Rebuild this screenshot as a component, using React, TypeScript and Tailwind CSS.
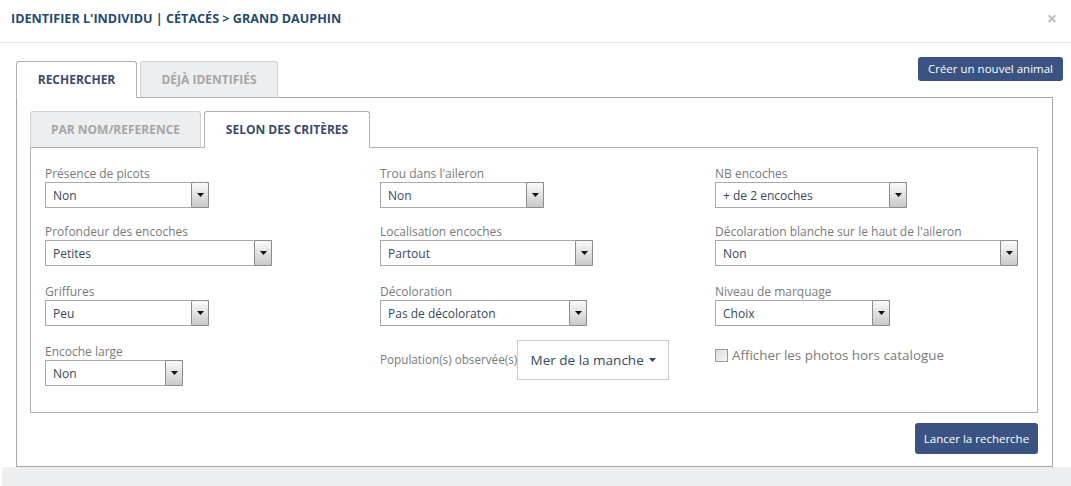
import type { ReactNode } from 'react';

function Arrow() {
  return (
    <svg width="7" height="4" viewBox="0 0 7 4">
      <path d="M0 0h7L3.5 4z" fill="#111" />
    </svg>
  );
}

function Select({ value, width }: { value: string; width: string }) {
  return (
    <div className={`flex h-[26px] border border-[#a9a9a9] bg-white ${width}`}>
      <span className="flex-1 truncate pl-[7px] text-[12px] leading-[25px] text-[#34495e]">{value}</span>
      <span className="-my-px -mr-px flex w-[18px] items-center justify-center rounded-[2px] border border-[#8c8c8c] bg-gradient-to-b from-[#fbfbfb] to-[#c9c9c9]">
        <Arrow />
      </span>
    </div>
  );
}

function Field({ label, value, width, gap }: { label: string; value: string; width: string; gap: string }) {
  return (
    <div className={`flex flex-col ${gap}`}>
      <label className="h-[17px] text-[12px] leading-[17px] text-[#7a7a7a]">{label}</label>
      <Select value={value} width={width} />
    </div>
  );
}

function Tab({ children, active, width }: { children: ReactNode; active?: boolean; width: string }) {
  return (
    <div
      className={`-mb-px flex h-[37px] items-center justify-center rounded-t-[3px] border text-[12px] font-bold ${width} ${
        active
          ? 'border-[#b0b0b0] border-b-white bg-white text-[#3a4a6b]'
          : 'border-[#cfd2d4] border-b-[#b0b0b0] bg-[#eceeef] text-[#a6a6a6]'
      }`}
    >
      {children}
    </div>
  );
}

export default function App() {
  return (
    <div className="relative h-[486px] w-[1071px] overflow-hidden bg-white font-['Open_Sans',sans-serif]">
      <div className="flex h-[43px] items-start justify-between border-b border-[#e5e5e5] pl-[11px] pr-[14px] pt-[9px]">
        <h1 className="text-[12.6px] font-bold uppercase leading-[19px] text-[#1f4b6e]">
          Identifier l'individu | Cétacés &gt; Grand dauphin
        </h1>
        <span className="text-[18px] font-bold leading-[19px] text-[#c0c0c0]">×</span>
      </div>

      <div className="pl-[16px] pt-[14px]">
        <div className="flex items-start justify-between pr-[8px]">
          <div className="mt-[4px] flex gap-[3px]">
            <Tab active width="w-[121px]">RECHERCHER</Tab>
            <Tab width="w-[138px]">DÉJÀ IDENTIFIÉS</Tab>
          </div>
          <button className="h-[24px] w-[145px] rounded-[3px] bg-[#3b5382] text-[11.5px] text-white">
            Créer un nouvel animal
          </button>
        </div>

        <div className="flex w-[1037px] flex-col border border-[#a8a8a8] pb-[12px] pl-[13px] pt-[13px]">
          <div className="relative z-10 flex gap-[3px]">
            <Tab width="w-[171px]">PAR NOM/REFERENCE</Tab>
            <Tab active width="w-[166px]">SELON DES CRITÈRES</Tab>
          </div>

          <div className="grid h-[266px] w-[1008px] grid-cols-[335px_335px_1fr] border border-[#b0b0b0] pl-[14px] pt-[17px]">
            <div className="flex flex-col">
              <Field label="Présence de picots" value="Non" width="w-[164px]" gap="mb-[15px]" />
              <Field label="Profondeur des encoches" value="Petites" width="w-[227px]" gap="mb-[17px]" />
              <Field label="Griffures" value="Peu" width="w-[164px]" gap="mb-[17px]" />
              <Field label="Encoche large" value="Non" width="w-[138px]" gap="" />
            </div>
            <div className="flex flex-col">
              <Field label="Trou dans l'aileron" value="Non" width="w-[164px]" gap="mb-[15px]" />
              <Field label="Localisation encoches" value="Partout" width="w-[213px]" gap="mb-[17px]" />
              <Field label="Décoloration" value="Pas de décoloraton" width="w-[207px]" gap="mb-[14px]" />
              <div className="flex items-center">
                <span className="whitespace-nowrap text-[11.7px] text-[#7a7a7a]">Population(s) observée(s)</span>
                <button className="flex h-[40px] w-[152px] items-center justify-center gap-[5px] border border-[#cccccc] bg-white text-[13.5px] text-[#34495e]">
                  Mer de la manche
                  <svg width="7" height="4" viewBox="0 0 7 4">
                    <path d="M0 0h7L3.5 4z" fill="#34495e" />
                  </svg>
                </button>
              </div>
            </div>
            <div className="flex flex-col">
              <Field label="NB encoches" value="+ de 2 encoches" width="w-[192px]" gap="mb-[15px]" />
              <Field label="Décolaration blanche sur le haut de l'aileron" value="Non" width="w-[303px]" gap="mb-[17px]" />
              <Field label="Niveau de marquage" value="Choix" width="w-[175px]" gap="mb-[17px]" />
              <label className="mt-[2px] flex items-center gap-[4px] text-[13.4px] text-[#7a7a7a]">
                <span className="h-[13px] w-[13px] border border-[#9a9a9a] bg-gradient-to-br from-[#dcdcdc] to-[#f7f7f7]" />
                Afficher les photos hors catalogue
              </label>
            </div>
          </div>

          <div className="flex w-[1008px] justify-end pt-[10px]">
            <button className="h-[31px] w-[123px] rounded-[3px] bg-[#3b5382] text-[11.5px] text-white">
              Lancer la recherche
            </button>
          </div>
        </div>
      </div>

      <div className="ml-[2px] h-[20px] rounded-tl-[4px] bg-[#eceeef]" />
    </div>
  );
}
